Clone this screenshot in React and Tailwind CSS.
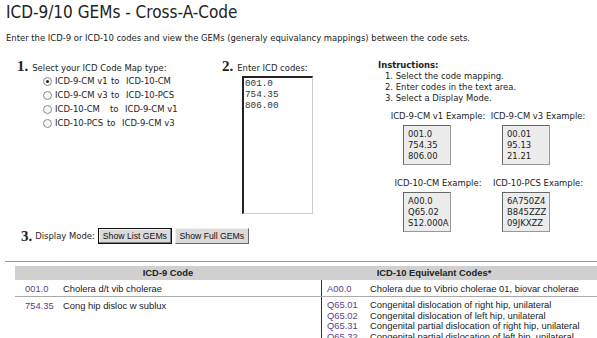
const F = "font-['DejaVu_Sans_Condensed','DejaVu_Sans',sans-serif]";

function Radio({ checked }) {
  return (
    <span className="relative inline-block w-[9px] h-[9px] rounded-full border border-[#8c8c8c] bg-[#f6f6f6] shrink-0">
      {checked && <span className="absolute left-[2px] top-[2px] w-[3px] h-[3px] rounded-full bg-[#222]" />}
    </span>
  );
}

function Num({ n }) {
  return <span className="font-['Liberation_Serif',serif] font-bold text-[15px] leading-[16px] mr-[4px]">{n}</span>;
}

function ExBox({ lines }) {
  return (
    <div className="w-[48px] h-[40px] border border-t-[#666] border-l-[#666] border-b-[#999] border-r-[#999] bg-[#ececec] pl-[4px] pt-[2px] text-[9.4px] leading-[11px] text-[#222] whitespace-pre">
      {lines.join("\n")}
    </div>
  );
}

export default function App() {
  const maps = [
    ["ICD-9-CM v1", "ICD-10-CM", true, "w-[56px]"],
    ["ICD-9-CM v3", "ICD-10-PCS", false, "w-[56px]"],
    ["ICD-10-CM", "ICD-9-CM v1", false, "w-[55px]"],
    ["ICD-10-PCS", "ICD-9-CM v3", false, "w-[52px]"],
  ];
  const right = [
    ["Q65.01", "Congenital dislocation of right hip, unilateral"],
    ["Q65.02", "Congenital dislocation of left hip, unilateral"],
    ["Q65.31", "Congenital partial dislocation of right hip, unilateral"],
    ["Q65.32", "Congenital partial dislocation of left hip, unilateral"],
  ];
  return (
    <div className={`w-[597px] h-[338px] overflow-hidden bg-white text-[#222] ${F}`}>
      <h1 className="pl-[6px] pt-[1px] text-[17px] leading-[22px] font-normal text-[#222]">ICD-9/10 GEMs - Cross-A-Code</h1>
      <p className="pl-[6px] mt-[9px] text-[9.4px] leading-[12px]">
        Enter the ICD-9 or ICD-10 codes and view the GEMs (generaly equivalancy mappings) between the code sets.
      </p>

      <div className="flex mt-[14px] pl-[17px]">
        <div className="w-[361px] flex flex-col">
          <div className="flex">
            <div className="w-[205px]">
              <div className="flex items-baseline h-[16px] text-[9.4px]">
                <Num n="1." />
                <span>Select your ICD Code Map type:</span>
              </div>
              {maps.map(([a, b, c, w], i) => (
                <div key={i} className="flex items-center h-[14px] pl-[26px] text-[9.4px] whitespace-nowrap">
                  <Radio checked={c} />
                  <span className={`ml-[3px] shrink-0 ${w}`}>{a}</span>
                  <span className="w-[15px] shrink-0">to</span>
                  <span>{b}</span>
                </div>
              ))}
            </div>
            <div className="w-[156px]">
              <div className="flex items-baseline h-[16px] text-[9.4px]">
                <Num n="2." />
                <span>Enter ICD codes:</span>
              </div>
              <div className="ml-[20px] mt-[2px] w-[71px] h-[138px] border-t-2 border-l-2 border-t-[#222] border-l-[#222] border-r border-b border-r-[#ccc] border-b-[#ccc] pl-[1px] pt-0 font-['Liberation_Mono',monospace] text-[9.3px] leading-[11px] whitespace-pre text-[#333]">
                {"001.0\n754.35\n806.00"}
              </div>
            </div>
          </div>
          <div className="flex items-center mt-[14px] pl-[4px] h-[16px] text-[9.4px]">
            <span className="font-['Liberation_Serif',serif] font-bold text-[15px] leading-[16px] mr-[3px]">3.</span>
            <span>Display Mode:</span>
            <button className="ml-[3px] w-[74px] h-[16px] border border-[#111] bg-[#dadada] shadow-[inset_-1px_-1px_0_#808080,inset_1px_1px_0_#f4f4f4] font-['Liberation_Sans',sans-serif] text-[8.7px] leading-[14px] text-[#111] whitespace-nowrap">
              Show List GEMs
            </button>
            <button className="ml-[3px] w-[74px] h-[16px] border border-t-[#f0f0f0] border-l-[#f0f0f0] border-b-[#666] border-r-[#666] bg-[#dadada] font-['Liberation_Sans',sans-serif] text-[8.7px] leading-[14px] text-[#111] whitespace-nowrap">
              Show Full GEMs
            </button>
          </div>
        </div>

        <div className="flex-1 pt-[1px] text-[9.4px]">
          <div className="font-bold leading-[11px]">Instructions:</div>
          <div className="pl-[7px] leading-[11px]">
            <div>1. Select the code mapping.</div>
            <div>2. Enter codes in the text area.</div>
            <div>3. Select a Display Mode.</div>
          </div>
          <div className="grid grid-cols-[100px_100px] ml-[10px] mt-[7px] whitespace-nowrap">
            <div>
              <div className="text-center leading-[12px]">ICD-9-CM v1 Example:</div>
              <div className="ml-[15px] mt-[3px]"><ExBox lines={["001.0", "754.35", "806.00"]} /></div>
            </div>
            <div>
              <div className="text-center leading-[12px]">ICD-9-CM v3 Example:</div>
              <div className="ml-[14px] mt-[3px]"><ExBox lines={["00.01", "95.13", "21.21"]} /></div>
            </div>
            <div className="mt-[12px]">
              <div className="text-center leading-[12px]">ICD-10-CM Example:</div>
              <div className="ml-[15px] mt-[3px]"><ExBox lines={["A00.0", "Q65.02", "S12.000A"]} /></div>
            </div>
            <div className="mt-[12px]">
              <div className="text-center leading-[12px]">ICD-10-PCS Example:</div>
              <div className="ml-[14px] mt-[3px]"><ExBox lines={["6A750Z4", "B845ZZZ", "09JKXZZ"]} /></div>
            </div>
          </div>
        </div>
      </div>

      <div className="ml-[5px] mt-[17px] h-px bg-[#999]" />
      <div className="ml-[15px] mt-[4px] font-['Liberation_Sans',sans-serif] text-[9.4px] text-[#222]">
        <div className="flex h-[14px] bg-[#d0d0d0] font-bold leading-[14px] text-[#222]">
          <div className="w-[306px] text-center">ICD-9 Code</div>
          <div className="w-[226px] text-center">ICD-10 Equivelant Codes*</div>
        </div>
        <div className="flex h-[17px] pt-[2px] leading-[14px] border-b border-[#aaa]">
          <div className="w-[306px] flex">
            <span className="pl-[10px] w-[48px] shrink-0 text-[#5e3c8f]">001.0</span>
            <span>Cholera d/t vib cholerae</span>
          </div>
          <div className="flex-1 flex border-l border-[#333] -mt-[2px] pt-[2px] whitespace-nowrap">
            <span className="pl-[5px] w-[48px] shrink-0 text-[#5e3c8f]">A00.0</span>
            <span>Cholera due to Vibrio cholerae 01, biovar cholerae</span>
          </div>
        </div>
        <div className="flex">
          <div className="w-[306px] flex pt-[4px] leading-[10.5px]">
            <span className="pl-[10px] w-[48px] shrink-0 text-[#5e3c8f]">754.35</span>
            <span>Cong hip disloc w sublux</span>
          </div>
          <div className="flex-1 border-l border-[#333] pt-[3px] h-[60px] leading-[10.5px] whitespace-nowrap">
            {right.map(([c, d]) => (
              <div key={c} className="flex">
                <span className="pl-[5px] w-[48px] shrink-0 text-[#5e3c8f]">{c}</span>
                <span>{d}</span>
              </div>
            ))}
          </div>
        </div>
      </div>
    </div>
  );
}
